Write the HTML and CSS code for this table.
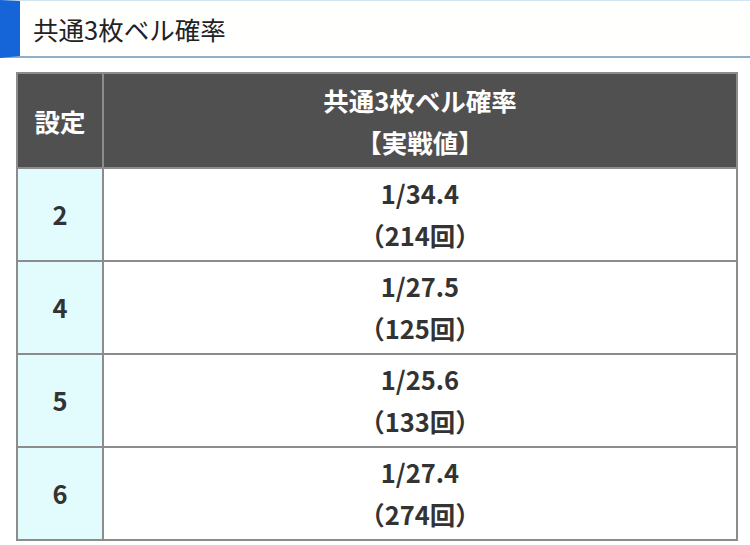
FILE: index.html
```html
<!DOCTYPE html>
<html lang="ja">
<head>
<meta charset="utf-8">
<link rel="stylesheet" href="styles.css">
</head>
<body>
<h2 class="heading">共通3枚ベル確率</h2>
<div class="wrap">
<table class="tbl">
  <thead>
    <tr><th class="c1">設定</th><th>共通3枚ベル確率<br>【実戦値】</th></tr>
  </thead>
  <tbody>
    <tr><td class="c1">2</td><td>1/34.4<br>（214回）</td></tr>
    <tr><td class="c1">4</td><td>1/27.5<br>（125回）</td></tr>
    <tr><td class="c1">5</td><td>1/25.6<br>（133回）</td></tr>
    <tr><td class="c1">6</td><td>1/27.4<br>（274回）</td></tr>
  </tbody>
</table>
</div>
</body>
</html>
```
FILE: styles.css
```css
html, body {
  margin: 0;
  padding: 0;
  background: #ffffff;
  font-family: "Noto Sans CJK JP", "Noto Sans", sans-serif;
  color: #333333;
}
.heading {
  margin: 0;
  height: 58px;
  box-sizing: border-box;
  border-top: 1px solid #cfe6f2;
  border-bottom: 2px solid #8fb0c8;
  border-left: 20px solid #1565d8;
  padding-left: 13px;
  display: flex;
  align-items: center;
  font-size: 25.5px;
  font-weight: 400;
  color: #222222;
  background: #fffffe;
}
.wrap {
  margin: 14px 0 0 16px;
  width: 722px;
}
.tbl {
  width: 100%;
  border-collapse: separate;
  border-spacing: 0;
  border-top: 2px solid #8c8c8c;
  border-left: 2px solid #8c8c8c;
  font-size: 25.5px;
  font-weight: 700;
  text-align: center;
}
.tbl th, .tbl td {
  border-right: 2px solid #8c8c8c;
  border-bottom: 2px solid #8c8c8c;
  line-height: 42px;
  padding: 3px 0 4px;
}
.tbl th {
  background: #505050;
  color: #ffffff;
  padding: 5px 0 4px;
}
.tbl td.c1 {
  background: #e2fcfe;
  width: 84px;
}
.tbl th.c1 {
  width: 84px;
}
```
